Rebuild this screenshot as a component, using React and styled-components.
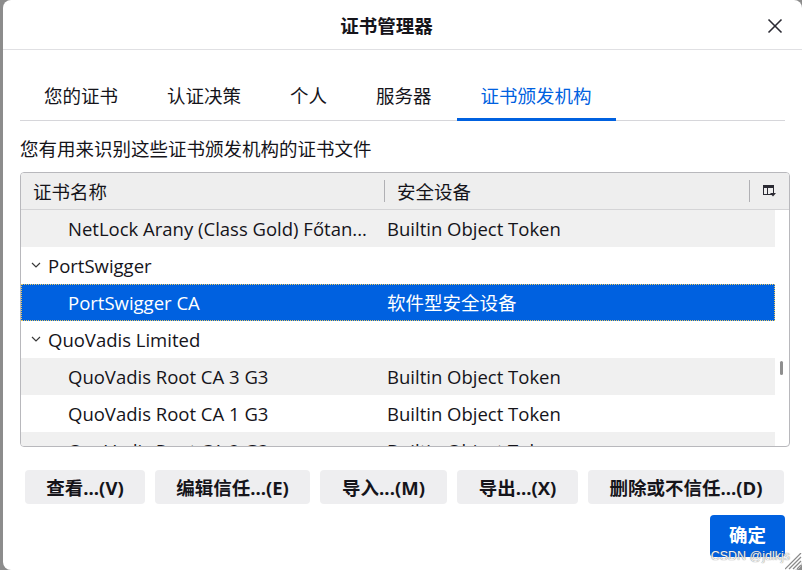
import React from 'react';
import styled, { createGlobalStyle } from 'styled-components';

const FONT = `"Open Sans", "Noto Sans CJK SC", sans-serif`;

const rows = [
    { kind: 'cert', name: 'NetLock Arany (Class Gold) Főtan...', device: 'Builtin Object Token', striped: true },
    { kind: 'group', name: 'PortSwigger' },
    { kind: 'cert', name: 'PortSwigger CA', device: '软件型安全设备', selected: true },
    { kind: 'group', name: 'QuoVadis Limited' },
    { kind: 'cert', name: 'QuoVadis Root CA 3 G3', device: 'Builtin Object Token', striped: true },
    { kind: 'cert', name: 'QuoVadis Root CA 1 G3', device: 'Builtin Object Token' },
    { kind: 'cert', name: 'QuoVadis Root CA 2 G3', device: 'Builtin Object Token', striped: true },
];

const tabs = ['您的证书', '认证决策', '个人', '服务器', '证书颁发机构'];

const actions = [
    { label: '查看...(V)', width: 120 },
    { label: '编辑信任...(E)', width: 155 },
    { label: '导入...(M)', width: 127 },
    { label: '导出...(X)', width: 121 },
    { label: '删除或不信任...(D)', width: 196 },
];

const Chevron = () => (
    <svg width="10" height="6" viewBox="0 0 10 6">
        <polyline points="1,1 5,5 9,1" fill="none" stroke="#3a3a3a" strokeWidth="1.2" />
    </svg>
);

const ColumnPicker = () => (
    <svg width="13" height="12" viewBox="0 0 13 12">
        <rect x="0.5" y="0.5" width="10" height="9" fill="none" stroke="#2b2a33" strokeWidth="1" />
        <rect x="0.5" y="0.5" width="10" height="2.5" fill="#2b2a33" />
        <line x1="4.5" y1="3" x2="4.5" y2="10" stroke="#2b2a33" strokeWidth="1" />
        <polygon points="7,8 13,8 10,11.5" fill="#2b2a33" />
    </svg>
);

const CloseIcon = () => (
    <svg width="16" height="16" viewBox="0 0 16 16">
        <line x1="1.5" y1="1.5" x2="14.5" y2="14.5" stroke="#2b2a33" strokeWidth="1.6" />
        <line x1="14.5" y1="1.5" x2="1.5" y2="14.5" stroke="#2b2a33" strokeWidth="1.6" />
    </svg>
);

const Grip = () => (
    <svg width="17" height="17" viewBox="0 0 17 17">
        <line x1="16" y1="4" x2="4" y2="16" stroke="#8a8a8a" strokeWidth="1.2" />
        <line x1="16" y1="8" x2="8" y2="16" stroke="#8a8a8a" strokeWidth="1.2" />
        <line x1="16" y1="12" x2="12" y2="16" stroke="#8a8a8a" strokeWidth="1.2" />
        <line x1="16" y1="0" x2="0" y2="16" stroke="#8a8a8a" strokeWidth="1.2" />
    </svg>
);

export default function App() {
    return (
        <>
            <GlobalStyle />
            <Dialog>
                <TitleBar>
                    <span />
                    <Title>证书管理器</Title>
                    <CloseButton><CloseIcon /></CloseButton>
                </TitleBar>

                <Body>
                    <TabStrip>
                        {tabs.map((t, i) => (
                            <Tab key={t} $active={i === tabs.length - 1}>{t}</Tab>
                        ))}
                    </TabStrip>

                    <Description>您有用来识别这些证书颁发机构的证书文件</Description>

                    <Table>
                        <HeaderRow>
                            <HeaderCell>证书名称</HeaderCell>
                            <HeaderCell $divided>安全设备</HeaderCell>
                            <PickerCell><ColumnPicker /></PickerCell>
                        </HeaderRow>
                        <TableBody>
                            <RowList>
                                {rows.map((r) => (
                                    <Row key={r.name} $striped={r.striped} $selected={r.selected}>
                                        {r.kind === 'group' ? (
                                            <GroupCell>
                                                <Chevron />
                                                <span>{r.name}</span>
                                            </GroupCell>
                                        ) : (
                                            <NameCell>{r.name}</NameCell>
                                        )}
                                        <DeviceCell>{r.device}</DeviceCell>
                                    </Row>
                                ))}
                            </RowList>
                            <ScrollGutter>
                                <ScrollThumb />
                            </ScrollGutter>
                        </TableBody>
                    </Table>

                    <ActionBar>
                        {actions.map((a) => (
                            <ActionButton key={a.label} $w={a.width}>{a.label}</ActionButton>
                        ))}
                    </ActionBar>

                    <Footer>
                        <PrimaryButton>确定</PrimaryButton>
                    </Footer>
                </Body>

                <Watermark>CSDN @jdlkjs</Watermark>
                <GripCorner><Grip /></GripCorner>
            </Dialog>
        </>
    );
}

const GlobalStyle = createGlobalStyle`
    html, body {
        margin: 0;
        padding: 0;
        background: #8c8c8c;
        overflow: hidden;
    }
    body {
        font-family: ${FONT};
        color: #15141a;
    }
`;

const Dialog = styled.div`
    position: relative;
    margin-left: 3px;
    width: 799px;
    height: 570px;
    background: #fff;
    border-radius: 8px;
    display: flex;
    flex-direction: column;
    overflow: hidden;
`;

const TitleBar = styled.div`
    height: 49px;
    flex-shrink: 0;
    display: grid;
    grid-template-columns: 1fr auto 1fr;
    align-items: center;
    border-bottom: 1px solid #e0e0e3;
`;

const Title = styled.div`
    font-size: 18.5px;
    font-weight: 700;
    margin-right: 32px;
`;

const CloseButton = styled.div`
    justify-self: end;
    margin-right: 19px;
    display: flex;
    align-items: center;
    margin-top: 2px;
`;

const Body = styled.div`
    padding: 0 12px 0 17px;
    display: flex;
    flex-direction: column;
`;

const TabStrip = styled.div`
    margin-top: 27px;
    margin-right: 5px;
    display: flex;
    gap: 1px;
    border-bottom: 1px solid #d6d6da;
`;

const Tab = styled.div`
    height: 44px;
    box-sizing: border-box;
    padding: 0 24px 6px;
    display: flex;
    align-items: center;
    font-size: 18.5px;
    color: ${p => (p.$active ? '#0061e0' : '#15141a')};
    border-bottom: 3px solid ${p => (p.$active ? '#0061e0' : 'transparent')};
    margin-bottom: -1px;
`;

const Description = styled.div`
    margin-top: 15px;
    font-size: 18.5px;
    line-height: 26px;
`;

const Table = styled.div`
    margin-top: 10px;
    height: 275px;
    box-sizing: border-box;
    border: 1px solid #b8b8bc;
    border-radius: 4px;
    overflow: hidden;
    display: flex;
    flex-direction: column;
`;

const HeaderRow = styled.div`
    height: 36px;
    flex-shrink: 0;
    display: grid;
    grid-template-columns: 363px 1fr 40px;
    align-items: center;
    background: #eeeeee;
    border-bottom: 1px solid #d4d4d6;
`;

const HeaderCell = styled.div`
    font-size: 18.5px;
    height: 22px;
    display: flex;
    align-items: center;
    padding-left: 12px;
    border-left: ${p => (p.$divided ? '1px solid #b0b0b4' : 'none')};
`;

const PickerCell = styled.div`
    height: 22px;
    border-left: 1px solid #b0b0b4;
    display: flex;
    align-items: center;
    padding-left: 13px;
`;

const TableBody = styled.div`
    flex: 1;
    display: flex;
    overflow: hidden;
`;

const RowList = styled.div`
    width: 754px;
    display: flex;
    flex-direction: column;
`;

const Row = styled.div`
    height: 37px;
    flex-shrink: 0;
    display: grid;
    grid-template-columns: 363px 1fr;
    align-items: center;
    font-size: 18.5px;
    padding-bottom: 1px;
    box-sizing: border-box;
    background: ${p => (p.$selected ? '#0061e0' : p.$striped ? '#f0f0f0' : '#fff')};
    color: ${p => (p.$selected ? '#fff' : '#15141a')};
    outline: ${p => (p.$selected ? '1px dotted #e8c860' : 'none')};
    outline-offset: -1px;
`;

const NameCell = styled.div`
    padding-left: 47px;
    white-space: nowrap;
`;

const GroupCell = styled.div`
    padding-left: 10px;
    display: flex;
    align-items: center;
    gap: 7px;
    white-space: nowrap;
`;

const DeviceCell = styled.div`
    padding-left: 3px;
    white-space: nowrap;
`;

const ScrollGutter = styled.div`
    flex: 1;
    position: relative;
`;

const ScrollThumb = styled.div`
    position: absolute;
    left: 5px;
    top: 151px;
    width: 3px;
    height: 14px;
    border-radius: 2px;
    background: #8f8f8f;
`;

const ActionBar = styled.div`
    margin-top: 23px;
    margin-left: 5px;
    display: flex;
    gap: 10px;
`;

const ActionButton = styled.div`
    width: ${p => p.$w}px;
    height: 34px;
    display: flex;
    align-items: center;
    justify-content: center;
    border-radius: 4px;
    background: #eeeef0;
    font-size: 18.5px;
    font-weight: 700;
    white-space: nowrap;
`;

const Footer = styled.div`
    margin-top: 11px;
    margin-right: 5px;
    display: flex;
    justify-content: flex-end;
`;

const PrimaryButton = styled.div`
    width: 75px;
    height: 42px;
    border-radius: 4px;
    background: #0061e0;
    color: #fff;
    font-size: 18.5px;
    font-weight: 700;
    display: flex;
    align-items: center;
    justify-content: center;
    padding-bottom: 4px;
    box-sizing: border-box;
`;

const Watermark = styled.div`
    position: absolute;
    right: 12px;
    bottom: 7px;
    font-family: "Liberation Sans", Arial, sans-serif;
    font-size: 12.5px;
    color: #f4f4f4;
    text-shadow: 0 0 1px #555;
`;

const GripCorner = styled.div`
    position: absolute;
    right: 0;
    bottom: 0;
    display: flex;
`;
